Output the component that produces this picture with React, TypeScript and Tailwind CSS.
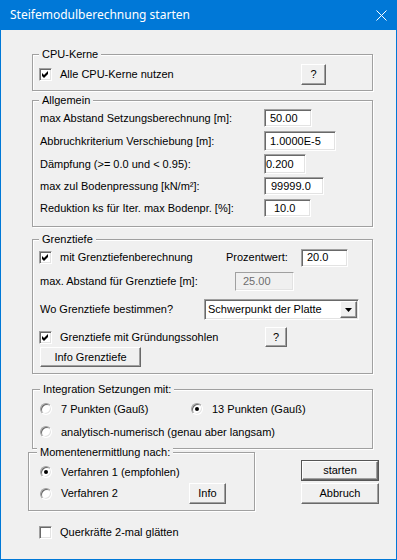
import React from "react";

const sunken =
  "border border-[#a0a0a0] border-b-white border-r-white shadow-[inset_1px_1px_0_#696969,inset_-1px_-1px_0_#e3e3e3]";
const raised =
  "bg-[#f0f0f0] border border-white border-r-[#696969] border-b-[#696969] shadow-[inset_-1px_-1px_0_#a0a0a0]";

function Group({
  title,
  className,
  labelClass = "ml-[6px]",
  children,
}: {
  title: string;
  className: string;
  labelClass?: string;
  children?: React.ReactNode;
}) {
  return (
    <div className={`border border-[#a0a0a0] shadow-[inset_1px_1px_0_#fff,1px_1px_0_#fff] ${className}`}>
      <div className={`-mt-[7px] ${labelClass} w-fit px-[3px] bg-[#f0f0f0] h-[13px] leading-[13px]`}>{title}</div>
      {children}
    </div>
  );
}

function Check({ checked = false, label }: { checked?: boolean; label: string }) {
  return (
    <div className="flex items-center">
      <div className={`w-[13px] h-[13px] bg-white ${sunken}`}>
        {checked && (
          <svg width="11" height="11" viewBox="0 0 11 11">
            <path d="M2 4 L4 6 L8 2 L8 5 L4 9 L2 7 Z" fill="#000" />
          </svg>
        )}
      </div>
      <span className="ml-[8px]">{label}</span>
    </div>
  );
}

function Radio({ checked = false, label }: { checked?: boolean; label: string }) {
  return (
    <div className="flex items-center">
      <div
        className={`w-[12px] h-[12px] rounded-full bg-white flex items-center justify-center border border-[#a0a0a0] border-b-white border-r-white shadow-[inset_1px_1px_0_#696969,inset_-1px_-1px_0_#e3e3e3]`}
      >
        {checked && <div className="w-[4px] h-[4px] rounded-full bg-black" />}
      </div>
      <span className="ml-[9px]">{label}</span>
    </div>
  );
}

function Btn({ className, children }: { className: string; children: React.ReactNode }) {
  return <div className={`flex items-center justify-center ${raised} ${className}`}>{children}</div>;
}

function Field({ value, className }: { value: string; className: string }) {
  return <div className={`bg-white flex items-center ${sunken} ${className}`}>{value}</div>;
}

export default function App() {
  return (
    <div className="w-[397px] h-[560px] bg-[#f0f0f0] border border-[#0078d7] font-['Liberation_Sans',Arial,sans-serif] text-[11px] leading-[13px] text-black">
      {/* title bar */}
      <div className="h-[29px] bg-[#0078d7] flex items-center justify-between pl-[9px] pr-[9px]">
        <span className="text-white text-[12px] font-['Noto_Sans',sans-serif] leading-[16px] -mt-[1px]">
          Steifemodulberechnung starten
        </span>
        <svg width="11" height="11" viewBox="0 0 11 11" className="-mt-[1px]">
          <path d="M0.5 0.5 L10.5 10.5 M10.5 0.5 L0.5 10.5" stroke="#fff" strokeWidth="1" />
        </svg>
      </div>

      {/* CPU-Kerne */}
      <Group title="CPU-Kerne" className="ml-[31px] mt-[24px] w-[341px] h-[37px]">
        <div className="mt-[3px] h-[20px] pl-[6px] flex items-center">
          <div className="w-[262px]">
            <Check checked label="Alle CPU-Kerne nutzen" />
          </div>
          <Btn className="w-[25px] h-[21px]">?</Btn>
        </div>
      </Group>

      {/* Allgemein */}
      <Group title="Allgemein" className="ml-[31px] mt-[9px] w-[341px] h-[127px]">
        <div className="pl-[7px]">
          <div className="mt-[1px] h-[20px] flex items-center">
            <span className="w-[224px]">max Abstand Setzungsberechnung [m]:</span>
            <Field value="50.00" className="w-[48px] h-[18px] pl-[5px]" />
          </div>
          <div className="mt-[3px] h-[20px] flex items-center">
            <span className="w-[224px]">Abbruchkriterium Verschiebung [m]:</span>
            <Field value="1.0000E-5" className="w-[72px] h-[20px] pl-[5px]" />
          </div>
          <div className="mt-[3px] h-[20px] flex items-center">
            <span className="w-[224px]">Dämpfung (&gt;= 0.0 und &lt; 0.95):</span>
            <Field value="0.200" className="w-[42px] h-[20px] pl-[1px]" />
          </div>
          <div className="mt-[2px] h-[20px] flex items-center">
            <span className="w-[224px]">max zul Bodenpressung [kN/m²]:</span>
            <Field value="99999.0" className="w-[60px] h-[18px] pl-[6px]" />
          </div>
          <div className="mt-[2px] h-[20px] flex items-center">
            <span className="w-[224px]">Reduktion ks für Iter. max Bodenpr. [%]:</span>
            <Field value="10.0" className="w-[47px] h-[18px] pl-[9px]" />
          </div>
        </div>
      </Group>

      {/* Grenztiefe */}
      <Group title="Grenztiefe" className="ml-[31px] mt-[12px] w-[341px] h-[135px]">
        <div className="pl-[6px]">
          <div className="mt-[2px] h-[19px] flex items-center">
            <div className="w-[187px]">
              <Check checked label="mit Grenztiefenberechnung" />
            </div>
            <span className="w-[75px]">Prozentwert:</span>
            <Field value="20.0" className="w-[47px] h-[18px] pl-[5px]" />
          </div>
          <div className="mt-[4px] h-[20px] flex items-center pl-[1px]">
            <span className="w-[195px]">max. Abstand für Grenztiefe [m]:</span>
            <div className="w-[59px] h-[19px] pl-[7px] flex items-center bg-[#f0f0f0] text-[#6d6d6d] border border-[#a0a0a0] border-b-white border-r-white shadow-[inset_-1px_-1px_0_#e3e3e3]">
              25.00
            </div>
          </div>
          <div className="mt-[8px] h-[21px] flex items-center pl-[1px]">
            <span className="w-[164px]">Wo Grenztiefe bestimmen?</span>
            <div className={`w-[155px] h-[21px] bg-white flex items-center justify-between pl-[3px] pr-[1px] ${sunken}`}>
              <span>Schwerpunkt der Platte</span>
              <div className={`w-[17px] h-[17px] flex items-center justify-center ${raised}`}>
                <svg width="7" height="4" viewBox="0 0 7 4">
                  <path d="M0 0 L7 0 L3.5 4 Z" fill="#000" />
                </svg>
              </div>
            </div>
          </div>
          <div className="mt-[7px] h-[20px] flex items-center">
            <div className="w-[226px]">
              <Check checked label="Grenztiefe mit Gründungssohlen" />
            </div>
            <Btn className="w-[22px] h-[20px]">?</Btn>
          </div>
          <div className="pl-[1px]">
            <Btn className="w-[101px] h-[20px]">Info Grenztiefe</Btn>
          </div>
        </div>
      </Group>

      {/* Integration */}
      <Group title="Integration Setzungen mit:" className="ml-[31px] mt-[15px] w-[341px] h-[60px]" labelClass="ml-[7px]">
        <div className="pl-[7px]">
          <div className="mt-[3px] h-[20px] flex items-center">
            <div className="w-[151px]">
              <Radio label="7 Punkten (Gauß)" />
            </div>
            <Radio checked label="13 Punkten (Gauß)" />
          </div>
          <div className="mt-[3px] h-[20px] flex items-center">
            <Radio label="analytisch-numerisch (genau aber langsam)" />
          </div>
        </div>
      </Group>

      {/* Momentenermittlung + buttons */}
      <div className="ml-[27px] flex items-start">
        <Group title="Momentenermittlung nach:" className="mt-[3px] w-[227px] h-[59px]" labelClass="ml-[8px]">
          <div className="pl-[11px]">
            <div className="mt-[3px] h-[20px] flex items-center">
              <Radio checked label="Verfahren 1 (empfohlen)" />
            </div>
            <div className="mt-[1px] h-[21px] flex items-center">
              <div className="w-[149px]">
                <Radio label="Verfahren 2" />
              </div>
              <Btn className="w-[37px] h-[21px]">Info</Btn>
            </div>
          </div>
        </Group>
        <div className="ml-[46px] mt-[11px] flex flex-col gap-[2px]">
          <div className="border border-[#555] w-[78px] h-[21px]">
            <Btn className="w-full h-full">starten</Btn>
          </div>
          <Btn className="w-[78px] h-[21px]">Abbruch</Btn>
        </div>
      </div>

      {/* Querkräfte */}
      <div className="ml-[38px] mt-[11px] h-[20px] flex items-center">
        <Check label="Querkräfte 2-mal glätten" />
      </div>
    </div>
  );
}
